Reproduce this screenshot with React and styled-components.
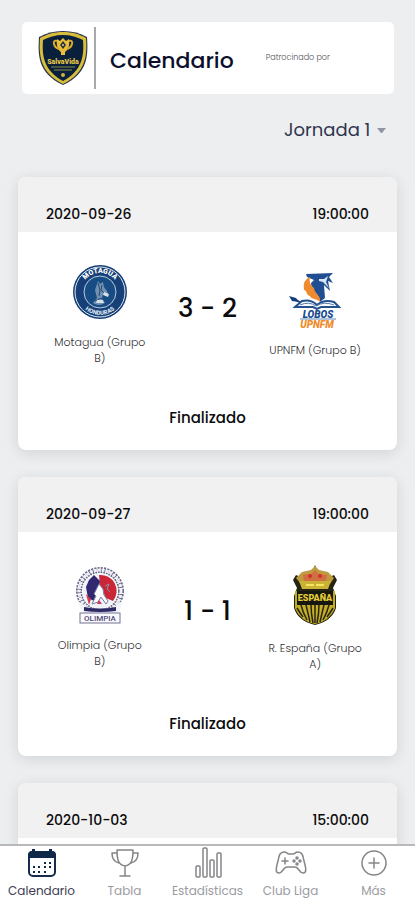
import React from "react";
import styled, { createGlobalStyle } from "styled-components";

const GlobalStyle = createGlobalStyle`
  *, *::before, *::after { box-sizing: border-box; }
  body {
    margin: 0;
    background: #eceef0;
    color: #0b0b0d;
    font-family: Poppins, Inter, sans-serif;
  }
`;

const Screen = styled.div`
  display: flex;
  flex-direction: column;
  height: 100vh;
`;

const Content = styled.main`
  flex: 1;
  min-height: 0;
  overflow-y: auto;
  scrollbar-width: none;
  padding: 22px 18px 0;
`;

const Header = styled.header`
  display: flex;
  align-items: center;
  height: 72px;
  margin: 0 3px 0 4px;
  padding: 0 15px;
  background: #fff;
  border-radius: 5px;
`;

const Title = styled.h1`
  margin: 0 0 0 14px;
  padding: 6px 0 0;
  font-size: 22px;
  line-height: 32px;
  font-weight: 500;
  color: #0c0f2b;
`;

const Divider = styled.span`
  width: 2px;
  height: 62px;
  margin-left: 5px;
  background: #a9a9ad;
`;

const Sponsor = styled.p`
  margin: 0 0 0 32px;
  font-size: 8px;
  line-height: 12px;
  font-weight: 300;
  color: #55555c;
`;

const RoundPicker = styled.label`
  display: flex;
  justify-content: flex-end;
  align-items: center;
  gap: 6px;
  margin: 21px 11px 32px 0;
`;

const RoundSelect = styled.select`
  appearance: none;
  border: 0;
  padding: 0;
  background: transparent;
  font: inherit;
  font-size: 18px;
  line-height: 30px;
  color: #30354f;
`;

const MatchList = styled.div`
  display: grid;
  gap: 27px;
`;

const Card = styled.article`
  background: #fff;
  border-radius: 8px;
  overflow: hidden;
  box-shadow: 0 3px 14px rgba(30, 35, 45, 0.13);
`;

const CardHeader = styled.div`
  display: flex;
  justify-content: space-between;
  height: 55px;
  padding: 27px 28px 0;
  background: #f1f1f1;
  font-size: 14px;
  line-height: 20px;
  font-weight: 500;
`;

const CardBody = styled.div`
  min-height: 218px;
  padding: 31px 28px 20px;
`;

const Teams = styled.div`
  display: grid;
  grid-template-columns: repeat(3, 1fr);
  align-items: center;
`;

const Team = styled.div`
  display: flex;
  flex-direction: column;
  align-items: center;
  gap: 13px;

  svg { height: ${(p) => p.$crest}px; }
`;

const TeamName = styled.span`
  width: 98px;
  text-align: center;
  font-size: 11px;
  line-height: 16px;
  font-weight: 300;
  color: #303034;
`;

const Score = styled.strong`
  padding-bottom: 13px;
  text-align: center;
  white-space: nowrap;
  font-size: 26px;
  line-height: 36px;
  font-weight: 500;
`;

const Status = styled.p`
  margin: 40px 0 0;
  text-align: center;
  font-size: 15px;
  line-height: 24px;
  font-weight: 500;
`;

const TabBar = styled.nav`
  display: grid;
  grid-template-columns: repeat(5, 1fr);
  height: 56px;
  background: #fff;
  border-top: 2px solid #b9b9bb;
`;

const Tab = styled.a`
  display: flex;
  flex-direction: column;
  align-items: center;
  justify-content: space-between;
  padding-top: 1px;
  white-space: nowrap;
  text-decoration: none;
  font-size: 12px;
  line-height: 18px;
  color: ${(p) => (p.$active ? "#3c4050" : "#9b9b9f")};
`;

const LeagueCrest = () => (
  <svg width="52" height="58" viewBox="0 0 52 58" aria-hidden="true">
    <path d="M26 2 C35 2 43 4 50 8 C51 25 52 44 26 56 C0 44 1 25 2 8 C9 4 17 2 26 2Z" fill="#27304a" />
    <path d="M26 3 C35 3 42 5 49 9 C50 25 50 43 26 55 C2 43 2 25 3 9 C10 5 17 3 26 3Z" fill="#d8bd3b" />
    <path d="M26 6 C34 6 40 8 46 11 C47 26 46 41 26 52 C6 41 5 26 6 11 C12 8 18 6 26 6Z" fill="#09203d" />
    <path d="M20 10 l3 2 l3-3 l3 3 l3-2 c1 7-1 11-4 13 v3 h-4 v-3 c-3-2-5-6-4-13z" fill="#e9bd37" />
    <path d="M20 12 c-5-2-4 6 2 8 M32 12 c5-2 4 6-2 8" fill="none" stroke="#d8a82d" strokeWidth="2" />
    <path d="M26 12 l3 4 l-3 4 l-3-4z" fill="#273447" />
    <circle cx="26" cy="16" r="1" fill="#efd354" />
    <text x="26" y="35" textAnchor="middle" fontFamily="Roboto, sans-serif" fontSize="7" fontWeight="900" fill="#e6c546">SalvaVida</text>
    <path d="M14 38 h24 M17 41 h18" stroke="#8b8643" strokeWidth="1" />
    <circle cx="26" cy="46" r="2" fill="#cdb344" />
  </svg>
);

const MotaguaCrest = () => (
  <svg viewBox="0 0 58 58" aria-hidden="true">
    <defs>
      <path id="motagua-top" d="M10 29 a19 19 0 0 1 38 0" />
      <path id="motagua-bottom" d="M6 29 a23 23 0 0 0 46 0" />
    </defs>
    <circle cx="29" cy="29" r="27" fill="#173f78" />
    <circle cx="29" cy="29" r="25" fill="none" stroke="#dce6ef" strokeWidth="1" />
    <circle cx="29" cy="29" r="16" fill="#174c85" stroke="#b9cbdc" strokeWidth="1" />
    <text fontFamily="Roboto, sans-serif" fontSize="7" fontWeight="900" fill="#fff" textAnchor="middle">
      <textPath href="#motagua-top" startOffset="50%">MOTAGUA</textPath>
    </text>
    <text fontFamily="Roboto, sans-serif" fontSize="6" fontWeight="900" fill="#d3e1ed" textAnchor="middle">
      <textPath href="#motagua-bottom" startOffset="50%">HONDURAS</textPath>
    </text>
    <path d="M27 18 l2 3 l3-2 l1 5 l3 4 l1 4 l-5-1 l-1 4 l3 5 c-5 3-9 2-12 0 l4-5 l-2-8z" fill="#7191ae" />
    <path d="M27 20 l2 7 l-1 6 M31 22 l-1 5 l4 4 M24 38 l6-3 l3 4" fill="none" stroke="#204b78" strokeWidth="1" />
    <path d="M33 29 l5 2 l-1 3 l-5-2z M26 37 l6 0 l1 3 l-8 0z" fill="#d6e1e9" />
  </svg>
);

const UpnfmCrest = () => (
  <svg viewBox="0 0 58 58" aria-hidden="true">
    <path d="M20 3 L47 2 L43 6 L47 12 L42 10 L44 20 L38 14 L39 27 L34 31 C34 23 25 20 25 12 L28 9 L21 6Z" fill="#214e93" />
    <path d="M33 8 l5 0 l4-3 l-2 6 l3 6 l-6-6 l-4-1z" fill="#d9e7f5" />
    <path d="M24 6 C16 10 18 15 18 19 C21 19 20 24 24 25 C25 29 31 27 34 31 C35 24 29 24 28 17 C24 14 23 10 24 6Z" fill="#ee8b2e" />
    <path d="M3 25 l7 2 l3 4 l-7-1z" fill="#173c7c" />
    <path d="M10 29 L19 34" stroke="#173c7c" strokeWidth="2" />
    <path d="M9 36 L16 30 Q25 28 31 34 Q38 28 48 31 L53 36 L35 36 L31 38 L27 36Z" fill="#f8fbff" stroke="#24508b" strokeWidth="2" />
    <path d="M14 34 q9-4 16 1 q8-5 18-1" fill="none" stroke="#547cac" strokeWidth="1" />
    <text x="32" y="47" textAnchor="middle" fontFamily="Roboto, sans-serif" fontSize="10" fontWeight="900" fontStyle="italic" fill="#174a8d">LOBOS</text>
    <path d="M14 48 H50" stroke="#6185b3" strokeWidth="1" />
    <text x="31" y="57" textAnchor="middle" fontFamily="Roboto, sans-serif" fontSize="10" fontWeight="900" fontStyle="italic" fill="#ef8b2b">UPNFM</text>
  </svg>
);

const OlimpiaCrest = () => (
  <svg viewBox="0 0 58 58" aria-hidden="true">
    <circle cx="29" cy="25" r="21" fill="none" stroke="#696887" strokeWidth="6" strokeDasharray="2 1" />
    <circle cx="29" cy="25" r="21" fill="none" stroke="#eff0f7" strokeWidth="3" strokeDasharray="3 1" />
    <circle cx="29" cy="25" r="17" fill="#eff0f8" />
    <path d="M28 9 A16 16 0 0 1 42 35 L35 32 L29 20Z" fill="#cb2636" />
    <path d="M23 9 l6 6 l-1 7 l-3 4 l-2 9 l-6-3 l-2-11 l3-7z" fill="#32286f" />
    <path d="M28 18 l4 5 l1 6 l4 6 l-2 3 l-5-7 l-3 5 l-6 2 l4-8 l-2-2z" fill="#fff" stroke="#777ba8" strokeWidth="1" />
    <path d="M15 28 l5 5 l-2 6z M28 34 l3 4 h-5z" fill="#cf3b48" />
    <path d="M34 20 l4-2 l-2 5 l3 3" fill="none" stroke="#8993af" strokeWidth="1" />
    <path d="M7 35 l7 5 v5 h30 v-5 l7-5 l-2 10 l-2 2 H11z" fill="#f4f4f9" />
    <path d="M13 41 q16 3 32 0 v4 q-16 2-32 0z" fill="#2d2965" />
    <rect x="9" y="47" width="40" height="10" fill="#fafafe" stroke="#747394" />
    <text x="29" y="55" textAnchor="middle" fontFamily="Roboto, sans-serif" fontSize="8" fontWeight="500" fill="#514978">OLIMPIA</text>
  </svg>
);

const EspanaCrest = () => (
  <svg viewBox="0 0 64 64" aria-hidden="true">
    <path d="M13 12 L17 14 L24 9 L30 7 L32 2 L34 7 L41 9 L47 14 L51 12 L54 17 L50 25 L53 33 V45 Q49 58 32 62 Q15 58 11 45 V33 L14 25 L10 17Z" fill="#252311" />
    <path d="M13 28 V45 Q18 57 32 60 Q46 57 51 45 V28" fill="#161711" stroke="#bdad20" strokeWidth="2" />
    <path d="M17 20 L13 15 L19 9 L28 7 L32 3 L36 7 L45 9 L51 15 L47 21Z" fill="#c09a3e" />
    <path d="M20 12 l8-1 l4-4 l4 4 l8 1 l-1 6 H21z" fill="#cf7040" />
    <circle cx="27" cy="13" r="2" fill="#d62a34" />
    <circle cx="37" cy="13" r="2" fill="#d62a34" />
    <path d="M16 18 H48 L45 26 H19Z" fill="#c9b236" />
    <path d="M23 22 h8 M33 22 h8" stroke="#f6e45c" strokeWidth="2" />
    <text x="32" y="38" textAnchor="middle" fontFamily="Roboto, sans-serif" fontSize="9" fontWeight="900" fill="#e3cc34">ESPAÑA</text>
    <path d="M13 42 H51 Q48 56 32 60 Q16 56 13 42Z" fill="#c5ae27" />
    <path d="M32 42 V60 M28 42 Q28 50 30 60 M36 42 Q36 50 34 60 M23 42 Q25 50 27 59 M41 42 Q39 50 37 59 M18 42 Q20 50 24 57 M46 42 Q44 50 40 57 M14 45 Q17 50 20 54 M50 45 Q47 50 44 54" stroke="#272414" strokeWidth="1.5" fill="none" />
  </svg>
);

const CalendarIcon = () => (
  <svg width="32" height="32" viewBox="0 0 32 32" aria-hidden="true">
    <rect x="3" y="5" width="26" height="24" rx="4" fill="#fff" stroke="#172b4d" strokeWidth="2" />
    <path d="M2 11 V8 Q2 4 6 4 V2 H9 V4 H23 V2 H26 V4 Q30 4 30 8 V11Z" fill="#102848" />
    <path d="M18 15h2v2h-2z M23 15h2v2h-2z M7 19h2v2H7z M12 19h2v2h-2z M18 19h2v2h-2z M23 19h2v2h-2z M7 24h2v2H7z M12 24h2v2h-2z M18 24h2v2h-2z" fill="#102848" />
  </svg>
);

const lineIcon = { fill: "none", stroke: "#858589", strokeWidth: 1.5, strokeLinejoin: "round", strokeLinecap: "round" };

const TrophyIcon = () => (
  <svg width="32" height="32" viewBox="0 0 32 32" aria-hidden="true" {...lineIcon}>
    <path d="M8 3 H24 C24 12 23 18 16 19 C9 18 8 12 8 3Z M8 6 H3 C3 12 5 15 10 16 M24 6 H29 C29 12 27 15 22 16 M16 19 V29 M11 29 H21" />
  </svg>
);

const StatsIcon = () => (
  <svg width="32" height="32" viewBox="0 0 32 32" aria-hidden="true" {...lineIcon}>
    <rect x="4" y="19" width="4" height="11" rx="1" />
    <rect x="11" y="1" width="4" height="29" rx="1" />
    <rect x="18" y="13" width="4" height="17" rx="1" />
    <rect x="25" y="6" width="4" height="24" rx="1" />
  </svg>
);

const GamepadIcon = () => (
  <svg width="32" height="32" viewBox="0 0 32 32" aria-hidden="true" {...lineIcon}>
    <path d="M9 5 C5 5 4 8 3 14 C1 21 0 26 4 26 C8 26 8 20 12 20 H20 C24 20 24 26 28 26 C32 26 31 21 29 14 C28 8 27 5 23 5 C20 5 20 7 18 7 H14 C12 7 12 5 9 5Z M10 11 V17 M7 14 H13" />
    <circle cx="22" cy="11" r="1" /><circle cx="22" cy="17" r="1" />
    <circle cx="19" cy="14" r="1" /><circle cx="25" cy="14" r="1" />
  </svg>
);

const MoreIcon = () => (
  <svg width="32" height="32" viewBox="0 0 32 32" aria-hidden="true" {...lineIcon}>
    <circle cx="16" cy="16" r="12" /><path d="M16 11 V21 M11 16 H21" />
  </svg>
);

const matches = [
  {
    date: "2020-09-26", time: "19:00:00", score: "3 - 2", status: "Finalizado",
    teams: [
      { name: "Motagua (Grupo B)", Crest: MotaguaCrest, size: 58 },
      { name: "UPNFM (Grupo B)", Crest: UpnfmCrest, size: 58 },
    ],
  },
  {
    date: "2020-09-27", time: "19:00:00", score: "1 - 1", status: "Finalizado",
    teams: [
      { name: "Olimpia (Grupo B)", Crest: OlimpiaCrest, size: 58 },
      { name: "R. España (Grupo A)", Crest: EspanaCrest, size: 64 },
    ],
  },
  { date: "2020-10-03", time: "15:00:00" },
];

const tabs = [
  { label: "Calendario", Icon: CalendarIcon, active: true },
  { label: "Tabla", Icon: TrophyIcon },
  { label: "Estadísticas", Icon: StatsIcon },
  { label: "Club Liga", Icon: GamepadIcon },
  { label: "Más", Icon: MoreIcon },
];

function TeamBlock({ team }) {
  const { Crest } = team;
  return (
    <Team $crest={team.size}>
      <Crest />
      <TeamName>{team.name}</TeamName>
    </Team>
  );
}

function MatchCard({ match }) {
  return (
    <Card>
      <CardHeader>
        <time dateTime={match.date}>{match.date}</time>
        <time>{match.time}</time>
      </CardHeader>
      <CardBody>
        {match.teams && (
          <>
            <Teams>
              <TeamBlock team={match.teams[0]} />
              <Score>{match.score}</Score>
              <TeamBlock team={match.teams[1]} />
            </Teams>
            <Status>{match.status}</Status>
          </>
        )}
      </CardBody>
    </Card>
  );
}

export default function App() {
  return (
    <Screen>
      <GlobalStyle />
      <Content>
        <Header>
          <LeagueCrest />
          <Divider />
          <Title>Calendario</Title>
          <Sponsor>Patrocinado por</Sponsor>
        </Header>
        <RoundPicker>
          <RoundSelect aria-label="Jornada" defaultValue="1">
            <option value="1">Jornada 1</option>
          </RoundSelect>
          <svg width="9" height="5" viewBox="0 0 9 5" aria-hidden="true">
            <path d="M0 0 H9 L5 5 H4Z" fill="#9096a4" />
          </svg>
        </RoundPicker>
        <MatchList>
          {matches.map((match) => <MatchCard key={match.date} match={match} />)}
        </MatchList>
      </Content>
      <TabBar>
        {tabs.map(({ label, Icon, active }) => (
          <Tab key={label} href="#" $active={active} aria-current={active ? "page" : undefined}>
            <Icon />
            {label}
          </Tab>
        ))}
      </TabBar>
    </Screen>
  );
}
